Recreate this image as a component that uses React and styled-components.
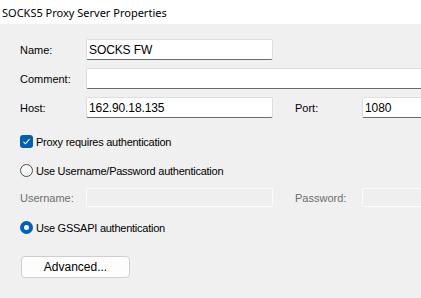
import React from 'react';
import styled, { createGlobalStyle } from 'styled-components';

const GlobalStyle = createGlobalStyle`
  html, body {
    margin: 0;
    padding: 0;
    background: #f0f0f0;
  }
  body {
    font-family: "Liberation Sans", Arial, sans-serif;
    font-size: 11px;
    color: #000;
  }
`;

const Window = styled.div`
  width: 421px;
  height: 298px;
  overflow: hidden;
  background: #f0f0f0;
`;

const TitleBar = styled.div`
  height: 24px;
  background: #ffffff;
  display: flex;
  align-items: center;
  padding-left: 2px;
  font-family: "Noto Sans", "Open Sans", sans-serif;
  font-size: 11px;
  color: #000;
  white-space: nowrap;
`;

const Body = styled.div`
  display: flex;
  flex-direction: column;
  padding: 15px 0 0 20px;
`;

const FieldRow = styled.div`
  display: grid;
  grid-template-columns: 66px 187px 22px 67px 1fr;
  align-items: center;
  height: ${(p) => p.$h || 21}px;
  margin-top: ${(p) => p.$mt || 0}px;
  width: 440px;
`;

const Label = styled.span`
  color: ${(p) => (p.$disabled ? '#6d6d6d' : '#000')};
  white-space: nowrap;
`;

const Input = styled.div`
  box-sizing: border-box;
  height: 100%;
  grid-column: ${(p) => p.$span || 'auto'};
  background: ${(p) => (p.$disabled ? '#efefef' : '#ffffff')};
  border: 1px solid ${(p) => (p.$disabled ? '#fbfbfb' : '#dedede')};
  border-bottom-color: ${(p) => (p.$disabled ? '#fbfbfb' : '#6a6a6a')};
  border-radius: 2px;
  padding: 0 2px;
  display: flex;
  align-items: center;
  font-size: 12px;
  letter-spacing: -0.1px;
  white-space: nowrap;
`;

const OptionRow = styled.label`
  display: flex;
  align-items: center;
  gap: 3px;
  height: 17px;
  margin-top: ${(p) => p.$mt}px;
  letter-spacing: -0.25px;
  white-space: nowrap;
`;

const CheckBox = styled.span`
  width: 13px;
  height: 13px;
  border-radius: 3px;
  background: #005fb8;
  display: flex;
  align-items: center;
  justify-content: center;
`;

const Radio = styled.span`
  box-sizing: border-box;
  width: 13px;
  height: 13px;
  border-radius: 50%;
  border: ${(p) => (p.$checked ? '4px solid #005fb8' : '1px solid #4f4f4f')};
  background: ${(p) => (p.$checked ? '#ffffff' : '#f6f6f6')};
`;

const Button = styled.button`
  box-sizing: border-box;
  width: 109px;
  height: 22px;
  margin: 20px 0 0 1px;
  border: 1px solid #cfcfcf;
  border-radius: 4px;
  background: #fdfdfd;
  font-family: "Liberation Sans", Arial, sans-serif;
  font-size: 12px;
  color: #000;
  padding: 0;
`;

export default function App() {
  return (
    <Window>
      <GlobalStyle />
      <TitleBar>SOCKS5 Proxy Server Properties</TitleBar>
      <Body>
        <FieldRow>
          <Label>Name:</Label>
          <Input>SOCKS FW</Input>
        </FieldRow>
        <FieldRow $mt={8}>
          <Label>Comment:</Label>
          <Input $span="2 / 6" />
        </FieldRow>
        <FieldRow $mt={8}>
          <Label>Host:</Label>
          <Input>162.90.18.135</Input>
          <span />
          <Label>Port:</Label>
          <Input>1080</Input>
        </FieldRow>
        <OptionRow $mt={15}>
          <CheckBox>
            <svg width="9" height="9" viewBox="0 0 9 9">
              <path d="M1.5 4.8 L3.5 6.8 L7.5 2.2" fill="none" stroke="#fff" strokeWidth="1.1" />
            </svg>
          </CheckBox>
          Proxy requires authentication
        </OptionRow>
        <OptionRow $mt={12}>
          <Radio />
          Use Username/Password authentication
        </OptionRow>
        <FieldRow $mt={9} $h={19}>
          <Label $disabled>Username:</Label>
          <Input $disabled />
          <span />
          <Label $disabled>Password:</Label>
          <Input $disabled />
        </FieldRow>
        <OptionRow $mt={12}>
          <Radio $checked />
          Use GSSAPI authentication
        </OptionRow>
        <Button>Advanced...</Button>
      </Body>
    </Window>
  );
}
